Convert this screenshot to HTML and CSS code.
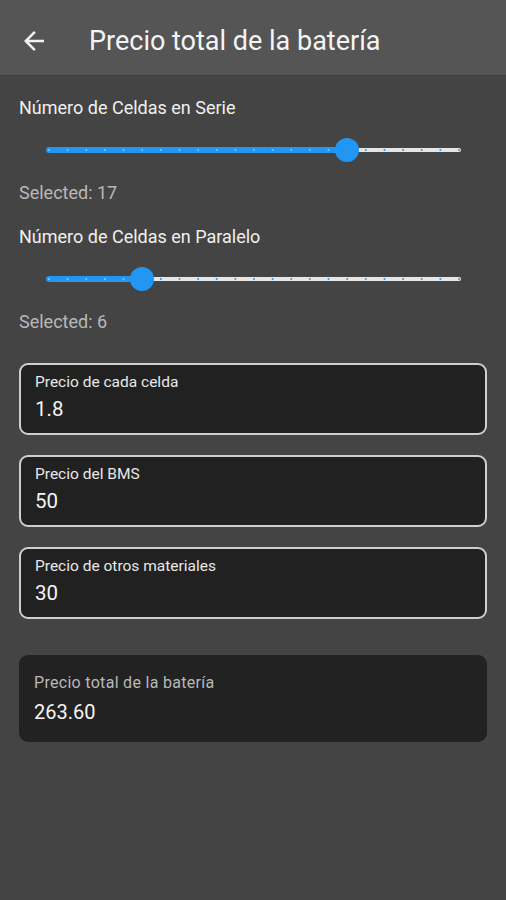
FILE: index.html
```html
<!DOCTYPE html>
<html lang="es">
<head>
<meta charset="utf-8">
<title>Precio total de la batería</title>
<link rel="stylesheet" href="styles.css">
</head>
<body>
<header class="appbar">
  <svg class="back" width="30" height="30" viewBox="0 0 24 24"><path d="M20 11H7.83l5.59-5.59L12 4l-8 8 8 8 1.41-1.41L7.83 13H20v-2z" fill="#f2f2f2"/></svg>
  <h1 class="title">Precio total de la batería</h1>
</header>
<main class="content">
  <section class="slider-group">
    <div class="slider-label">Número de Celdas en Serie</div>
    <svg class="slider" width="468" height="40" viewBox="0 0 468 40">
      <line x1="328" y1="20" x2="440" y2="20" stroke="#e6e6e6" stroke-width="4" stroke-linecap="round"/>
      <line x1="30" y1="20" x2="328" y2="20" stroke="#2196f3" stroke-width="6" stroke-linecap="round"/>
      <g fill="#8cc8f8">
        <circle cx="30" cy="20" r="1"/><circle cx="48.6" cy="20" r="1"/><circle cx="67.3" cy="20" r="1"/><circle cx="85.9" cy="20" r="1"/><circle cx="104.5" cy="20" r="1"/><circle cx="123.2" cy="20" r="1"/><circle cx="141.8" cy="20" r="1"/><circle cx="160.5" cy="20" r="1"/><circle cx="179.1" cy="20" r="1"/><circle cx="197.7" cy="20" r="1"/><circle cx="216.4" cy="20" r="1"/><circle cx="235" cy="20" r="1"/><circle cx="253.6" cy="20" r="1"/><circle cx="272.3" cy="20" r="1"/><circle cx="290.9" cy="20" r="1"/><circle cx="309.5" cy="20" r="1"/>
      </g>
      <g fill="#2196f3">
        <circle cx="346.8" cy="20" r="1"/><circle cx="365.5" cy="20" r="1"/><circle cx="384.1" cy="20" r="1"/><circle cx="402.7" cy="20" r="1"/><circle cx="421.4" cy="20" r="1"/><circle cx="440" cy="20" r="1"/>
      </g>
      <circle cx="328" cy="20" r="12" fill="#2196f3"/>
    </svg>
    <div class="selected">Selected: 17</div>
  </section>
  <section class="slider-group">
    <div class="slider-label">Número de Celdas en Paralelo</div>
    <svg class="slider" width="468" height="40" viewBox="0 0 468 40">
      <line x1="123" y1="20" x2="440" y2="20" stroke="#e6e6e6" stroke-width="4" stroke-linecap="round"/>
      <line x1="30" y1="20" x2="123" y2="20" stroke="#2196f3" stroke-width="6" stroke-linecap="round"/>
      <g fill="#8cc8f8">
        <circle cx="30" cy="20" r="1"/><circle cx="48.6" cy="20" r="1"/><circle cx="67.3" cy="20" r="1"/><circle cx="85.9" cy="20" r="1"/><circle cx="104.5" cy="20" r="1"/>
      </g>
      <g fill="#2196f3">
        <circle cx="141.8" cy="20" r="1"/><circle cx="160.5" cy="20" r="1"/><circle cx="179.1" cy="20" r="1"/><circle cx="197.7" cy="20" r="1"/><circle cx="216.4" cy="20" r="1"/><circle cx="235" cy="20" r="1"/><circle cx="253.6" cy="20" r="1"/><circle cx="272.3" cy="20" r="1"/><circle cx="290.9" cy="20" r="1"/><circle cx="309.5" cy="20" r="1"/><circle cx="328.2" cy="20" r="1"/><circle cx="346.8" cy="20" r="1"/><circle cx="365.5" cy="20" r="1"/><circle cx="384.1" cy="20" r="1"/><circle cx="402.7" cy="20" r="1"/><circle cx="421.4" cy="20" r="1"/><circle cx="440" cy="20" r="1"/>
      </g>
      <circle cx="123" cy="20" r="12" fill="#2196f3"/>
    </svg>
    <div class="selected">Selected: 6</div>
  </section>
  <section class="fields">
    <div class="field">
      <div class="field-label">Precio de cada celda</div>
      <div class="field-value">1.8</div>
    </div>
    <div class="field">
      <div class="field-label">Precio del BMS</div>
      <div class="field-value">50</div>
    </div>
    <div class="field">
      <div class="field-label">Precio de otros materiales</div>
      <div class="field-value">30</div>
    </div>
  </section>
  <section class="total">
    <div class="total-label">Precio total de la batería</div>
    <div class="total-value">263.60</div>
  </section>
</main>
</body>
</html>
```

FILE: styles.css
```css
* { box-sizing: border-box; }
html, body {
  margin: 0;
  padding: 0;
  height: 100%;
}
body {
  background: #444444;
  font-family: Roboto, "Noto Sans", "Liberation Sans", sans-serif;
  color: #f2f2f2;
}
.appbar {
  height: 76px;
  background: #555555;
  display: flex;
  align-items: center;
  padding: 6px 0 0 19px;
  border-bottom: 1px solid #3e3e3e;
}
.back {
  display: block;
  flex: none;
}
.title {
  margin: 0 0 0 40px;
  font-size: 27px;
  line-height: 32px;
  font-weight: 400;
  color: #f4f4f4;
}
.content {
  padding: 22px 19px 0 19px;
  display: flex;
  flex-direction: column;
}
.slider-group {
  display: flex;
  flex-direction: column;
  margin-bottom: 24px;
}
.slider-label {
  font-size: 18px;
  line-height: 20px;
  color: #f0f0f0;
}
.slider {
  display: block;
  margin-top: 12px;
}
.selected {
  margin-top: 13px;
  font-size: 18px;
  line-height: 20px;
  color: #b8b8b8;
}
.fields {
  margin-top: 7px;
  display: flex;
  flex-direction: column;
  gap: 20px;
}
.field {
  height: 72px;
  background: #212121;
  border: 2px solid #cfcfcf;
  border-radius: 9px;
  padding: 7px 14px 0 14px;
  display: flex;
  flex-direction: column;
}
.field-label {
  font-size: 15.5px;
  line-height: 20px;
  color: #e8e8e8;
}
.field-value {
  margin-top: 5px;
  font-size: 20.5px;
  line-height: 24px;
  color: #f4f4f4;
}
.total {
  margin-top: 36px;
  height: 87px;
  background: #222222;
  border-radius: 9px;
  padding: 18px 15px 0 15px;
  display: flex;
  flex-direction: column;
}
.total-label {
  font-size: 16px;
  line-height: 20px;
  letter-spacing: 0.3px;
  color: #b8b8b8;
}
.total-value {
  margin-top: 7px;
  font-size: 20px;
  line-height: 24px;
  color: #f6f6f6;
}
```
